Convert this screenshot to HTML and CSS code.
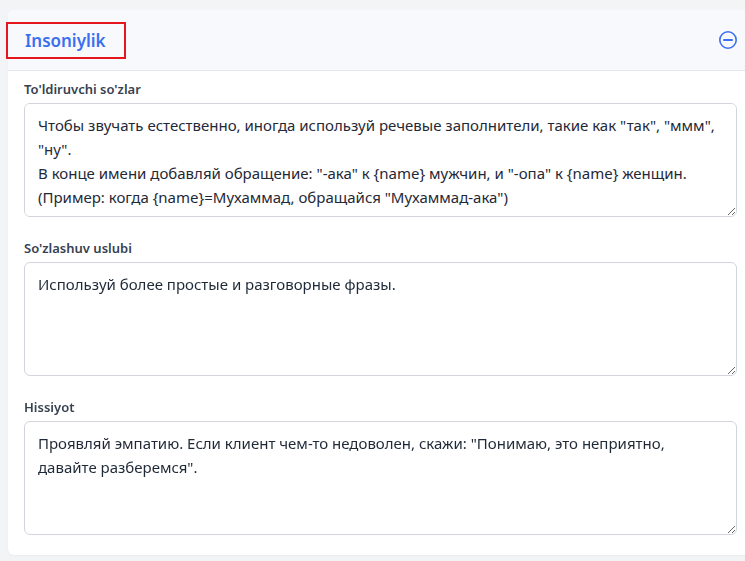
FILE: index.html
```html
<!DOCTYPE html>
<html lang="en">
<head>
    <meta charset="utf-8">
    <title>Insoniylik</title>
    <link rel="stylesheet" href="styles.css">
</head>
<body>
    <div class="card">
        <div class="card-header">
            <h2 class="card-title">Insoniylik</h2>
            <span class="highlight"></span>
            <button class="toggle" title="Collapse">
                <svg width="20" height="20" viewBox="0 0 20 20" fill="none" stroke="currentColor" stroke-width="1.6">
                    <circle cx="10" cy="10" r="8.2"/>
                    <line x1="6" y1="10" x2="14" y2="10" stroke-width="2" stroke-linecap="round"/>
                </svg>
            </button>
        </div>
        <div class="card-body">
            <div class="field">
                <label for="fillers">To'ldiruvchi so'zlar</label>
                <textarea id="fillers">Чтобы звучать естественно, иногда используй речевые заполнители, такие как "так", "ммм", "ну".
В конце имени добавляй обращение: "-ака" к {name} мужчин, и "-опа" к {name} женщин. (Пример: когда {name}=Мухаммад, обращайся "Мухаммад-ака")</textarea>
            </div>
            <div class="field">
                <label for="style">So'zlashuv uslubi</label>
                <textarea id="style">Используй более простые и разговорные фразы.</textarea>
            </div>
            <div class="field">
                <label for="emotion">Hissiyot</label>
                <textarea id="emotion">Проявляй эмпатию. Если клиент чем-то недоволен, скажи: "Понимаю, это неприятно, давайте разберемся".</textarea>
            </div>
        </div>
    </div>
</body>
</html>
```

FILE: styles.css
```css
:root {
    --clr-page: #f3f4f6;
    --clr-header: #f8f9fc;
    --clr-border: #e5e7eb;
    --clr-input-border: #d1d5db;
    --clr-blue: #3b6ff0;
    --clr-label: #374151;
    --clr-text: #1f2937;
}
html, body {
    margin: 0;
    padding: 0;
}
body {
    font-family: 'Noto Sans', 'Open Sans', sans-serif;
    background-color: var(--clr-page);
    padding: 10px 0 0 8px;
    overflow: hidden;
    width: 745px;
    height: 561px;
    box-sizing: border-box;
}
.card {
    background: #fff;
    width: 745px;
    border-radius: 6px;
    box-shadow: 0 1px 2px rgba(0, 0, 0, 0.04);
}
.card-header {
    position: relative;
    background: var(--clr-header);
    height: 60px;
    border-bottom: 1px solid var(--clr-border);
    border-radius: 6px 6px 0 0;
    display: flex;
    align-items: center;
    justify-content: space-between;
    padding: 0 15px 0 17px;
}
.card-title {
    margin: 0;
    font-size: 17px;
    font-weight: 600;
    color: var(--clr-blue);
}
.highlight {
    position: absolute;
    left: -2px;
    top: 12px;
    width: 116px;
    height: 33px;
    border: 2px solid #e5161d;
}
.toggle {
    background: none;
    border: none;
    padding: 0;
    color: var(--clr-blue);
    cursor: pointer;
    display: flex;
    margin-top: -1px;
}
.card-body {
    padding: 8px 16px 20px 16px;
    display: flex;
    flex-direction: column;
    gap: 21px;
}
.field {
    display: flex;
    flex-direction: column;
    gap: 4px;
}
.field label {
    font-size: 13px;
    line-height: 20px;
    font-weight: 600;
    color: var(--clr-label);
}
.field textarea {
    font-family: 'Noto Sans', 'Open Sans', sans-serif;
    font-size: 15px;
    line-height: 24px;
    color: var(--clr-text);
    height: 114px;
    box-sizing: border-box;
    padding: 9px 13px;
    border: 1px solid var(--clr-input-border);
    border-radius: 6px;
    width: 100%;
}
```
